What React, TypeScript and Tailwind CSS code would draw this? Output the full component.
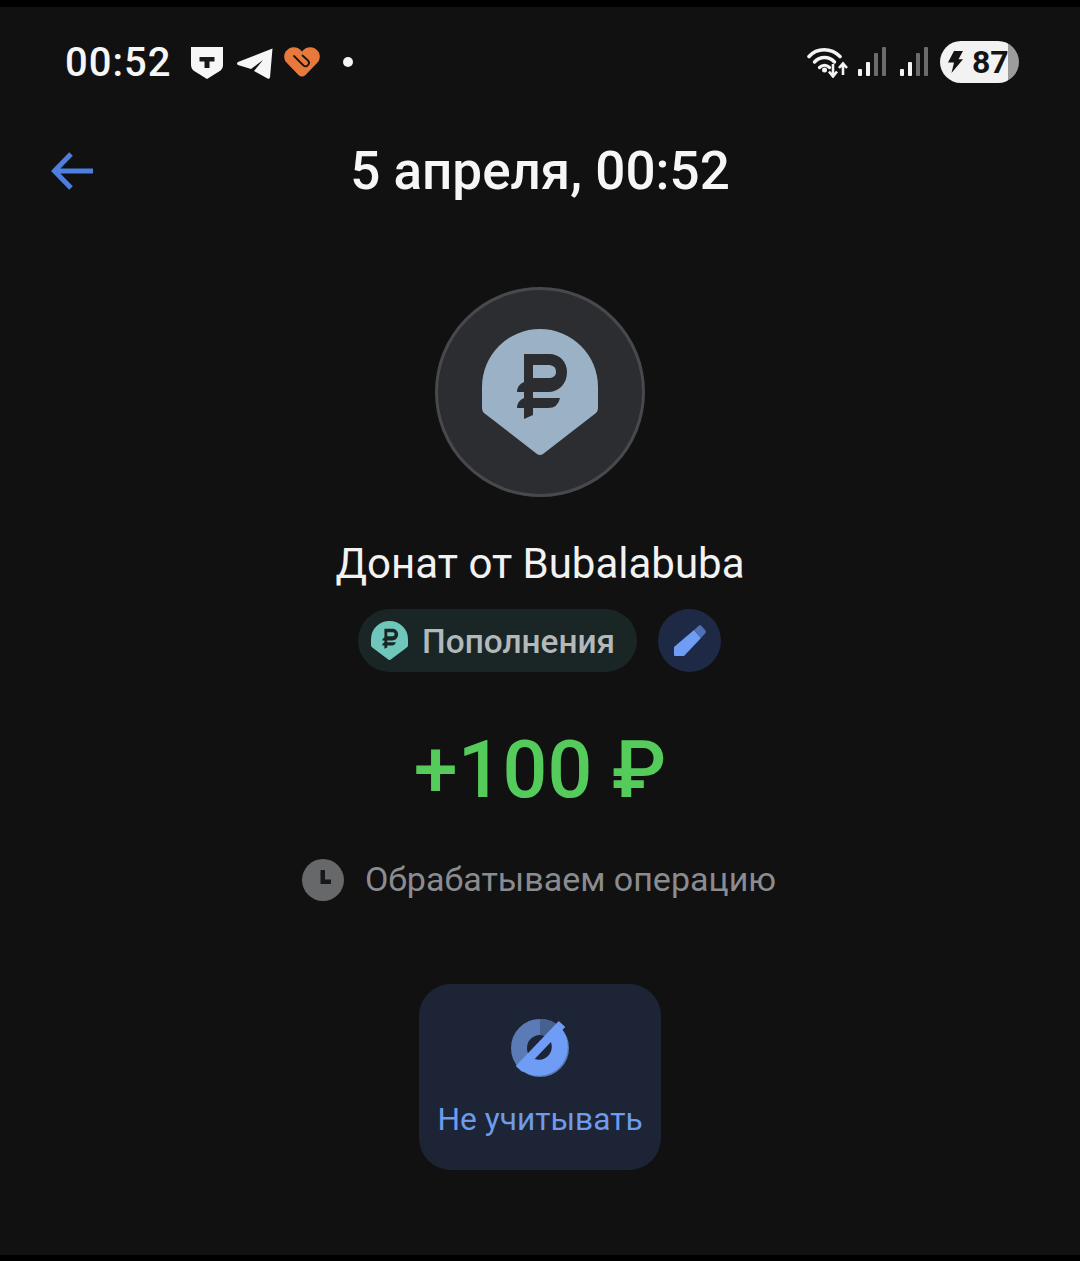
import React from "react";

function Pin({ bg, fg, className }: { bg: string; fg: string; className: string }) {
  return (
    <svg viewBox="0 0 116 126" className={className} preserveAspectRatio="none">
      <path d="M0 58A58 58 0 0 1 116 58V79Q116 83 112 85.500L61 125Q58 127 55 125L4 85.500Q0 83 0 79Z" fill={bg} />
      <path d="M42 25H67C78 25 85 33 85 43C85 55 77 63 66 63H51V69H78Q76 79 66 79H51V86L42 90V79H35Q35 72 42 69V63H35Q35 56 42 53ZM51 36V49H66C71 49 74 47 74 43C74 38 71 36 66 36Z" fill={fg} fillRule="evenodd" />
    </svg>
  );
}

function Wifi() {
  return (
    <svg width="42" height="32" viewBox="0 0 42 32" className="mt-[-1px]" fill="none" stroke="#f4f4f4">
      <path d="M2 10.500C10 1.500 24 1.500 33 10.500" strokeWidth="3.600" strokeLinecap="round" />
      <path d="M7.500 16C13 10 22 10 27.500 16" strokeWidth="3.400" strokeLinecap="round" />
      <path d="M12.500 21.500C15.500 18.500 19.500 18.500 22.500 21.500" strokeWidth="3.200" strokeLinecap="round" />
      <circle cx="17.500" cy="24" r="2.500" fill="#f4f4f4" stroke="none" />
      <path d="M26 18V30M22 25.500L26 30.500L30 25.500M36 29V18M32 22L36 17.500L40 22" strokeWidth="2.600" />
    </svg>
  );
}

function Signal() {
  return (
    <svg width="28" height="30" viewBox="0 0 28 30">
      <rect x="0" y="22" width="4" height="7" rx="1" fill="#f4f4f4" />
      <rect x="8" y="15" width="4" height="14" rx="1" fill="#f4f4f4" />
      <rect x="16" y="6" width="4" height="23" rx="1" fill="#6c6c6c" />
      <rect x="24" y="0" width="4" height="29" rx="1" fill="#6c6c6c" />
    </svg>
  );
}

export default function App() {
  return (
    <div className="w-[1080px] h-[1261px] bg-black pt-[7px] font-['Roboto',sans-serif] overflow-hidden">
      <div className="h-[1248px] bg-[#111112] pt-[34px] flex flex-col items-center">
        {/* status bar */}
        <div className="w-full h-[42px] pl-[65px] pr-[61px] flex items-center justify-between">
          <div className="flex items-center">
            <span className="text-[40px] leading-[42px] font-medium text-[#f6f6f6] w-[126px] tracking-[1px] mt-[2px]">00:52</span>
            <svg width="32" height="32" viewBox="0 0 32 32" className="mr-[14px] mt-[2px]">
              <path d="M0 0H32V18Q32 22 28 24.500L16 32L4 24.500Q0 22 0 18Z" fill="#f6f6f6" />
              <path d="M8.500 10H23.500V14.500H18.500V21H13.500V14.500H8.500Z" fill="#17181a" />
            </svg>
            <svg width="36" height="31" viewBox="0 0 36 31" className="mr-[11px] mt-[2px]">
              <path d="M35.500 0.500L1 14Q-1 15.500 1 17L14 21L26 12L17 23L31 30.800Q32.500 31 33 29.500Z" fill="#f6f6f6" />
            </svg>
            <svg width="36" height="30" viewBox="0 0 36 30" className="mr-[23px]">
              <path d="M18 4.500C15 0.500 9.500 -1 5 1.500C0 4.500 -1 10 1.500 14.500L14.500 28Q18 31 21.500 28L34.500 14.500C37 10 36 4.500 31 1.500C26.500 -1 21 0.500 18 4.500Z" fill="#e8793c" />
              <path d="M10 9L19.500 18.500C22.500 21 27 16.500 24 13.500L18.500 8.500" fill="none" stroke="#1a1513" strokeWidth="1.800" strokeLinecap="round" />
            </svg>
            <div className="w-[10px] h-[10px] rounded-full bg-[#f6f6f6]" />
          </div>
          <div className="flex items-center">
            <Wifi />
            <div className="flex gap-[14px] ml-[9px] mt-[-1px] mr-[12px]">
              <Signal />
              <Signal />
            </div>
            <div className="w-[79px] h-[42px] rounded-full bg-[linear-gradient(90deg,#f2f2f2_86%,#9c9c9c_86%)] flex items-center pl-[8px]">
              <svg width="15" height="22" viewBox="0 0 15 27" preserveAspectRatio="none">
                <path d="M6 0H15L10.500 10H15L3.500 27L6 14H0Z" fill="#141414" />
              </svg>
              <span className="ml-[9px] text-[32px] leading-[42px] font-bold text-[#141414]">87</span>
            </div>
          </div>
        </div>

        {/* header */}
        <div className="w-full h-[60px] mt-[58px] grid grid-cols-[1fr_auto_1fr] items-center">
          <svg width="44" height="40" viewBox="0 0 44 40" fill="none" stroke="#4e7fe0" strokeWidth="5" className="ml-[51px]">
            <path d="M42 20H4M20 3L3.500 20L20 37" />
          </svg>
          <span className="text-[53px] leading-[60px] font-medium text-[#f6f6f6]">5 апреля, 00:52</span>
          <span />
        </div>

        {/* avatar */}
        <div className="mt-[86px] w-[210px] h-[210px] rounded-full bg-[#2b2d31] border-[3px] border-[#48494c] flex items-center justify-center">
          <Pin bg="#9ab1c6" fg="#2b2d31" className="w-[116px] h-[126px] mt-[-1px]" />
        </div>

        <div className="mt-[42px] text-[42px] leading-[50px] text-[#f2f2f2]">Донат от Bubalabuba</div>

        {/* chips */}
        <div className="mt-[20px] flex gap-[21px] h-[63px] ml-[-1px]">
          <div className="w-[279px] rounded-full bg-[#1a2526] flex items-center pl-[13px]">
            <Pin bg="#6fc7bb" fg="#1a2526" className="w-[37px] h-[39px]" />
            <span className="ml-[14px] text-[33.400px] leading-[63px] font-medium text-[#b3b8ba] mt-[2px]">Пополнения</span>
          </div>
          <div className="w-[63px] rounded-full bg-[#1e2a45] flex items-center justify-center">
            <svg width="32" height="31" viewBox="0 0 32 31">
              <path d="M0 22L20 5L27 13L10 31H1Q0 31 0 30Z" fill="#6f9cf5" />
              <path d="M20 5L25 0.500Q26 0 27 0.500L31.500 5.500Q32 7 31.500 8L27 13Z" fill="#4f71b3" />
            </svg>
          </div>
        </div>

        <div className="mt-[53px] text-[79px] leading-[90px] font-medium text-[#54cb5b]">+100 ₽</div>

        {/* state */}
        <div className="mt-[44px] h-[42px] flex items-center gap-[21px] ml-[-2px]">
          <div className="w-[42px] h-[42px] rounded-full bg-[#67686a] flex items-center justify-center">
            <svg width="42" height="42" viewBox="0 0 42 42">
              <path d="M18.500 11H23V20.500H29V25H18.500Z" fill="#17181a" />
            </svg>
          </div>
          <span className="text-[34px] leading-[42px] text-[#8b8c90] mt-[-2px]">Обрабатываем операцию</span>
        </div>

        {/* action */}
        <div className="mt-[83px] w-[242px] h-[186px] rounded-[32px] bg-[#1c2435] flex flex-col items-center pt-[35px]">
          <svg width="58" height="58" viewBox="0 0 58 58" fill="none">
            <circle cx="29" cy="29" r="21" stroke="#5a7bb5" strokeWidth="16" />
            <path d="M29 8A21 21 0 0 1 44 14" stroke="#46618f" strokeWidth="16" />
            <path d="M43.800 14.200A21 21 0 0 1 14.200 43.800" stroke="#6f9cf5" strokeWidth="16" />
            <path d="M8 50L51 5" stroke="#6f9cf5" strokeWidth="9" />
          </svg>
          <span className="mt-[22px] text-[31.700px] leading-[42px] text-[#6e9bea]">Не учитывать</span>
        </div>
      </div>
    </div>
  );
}
